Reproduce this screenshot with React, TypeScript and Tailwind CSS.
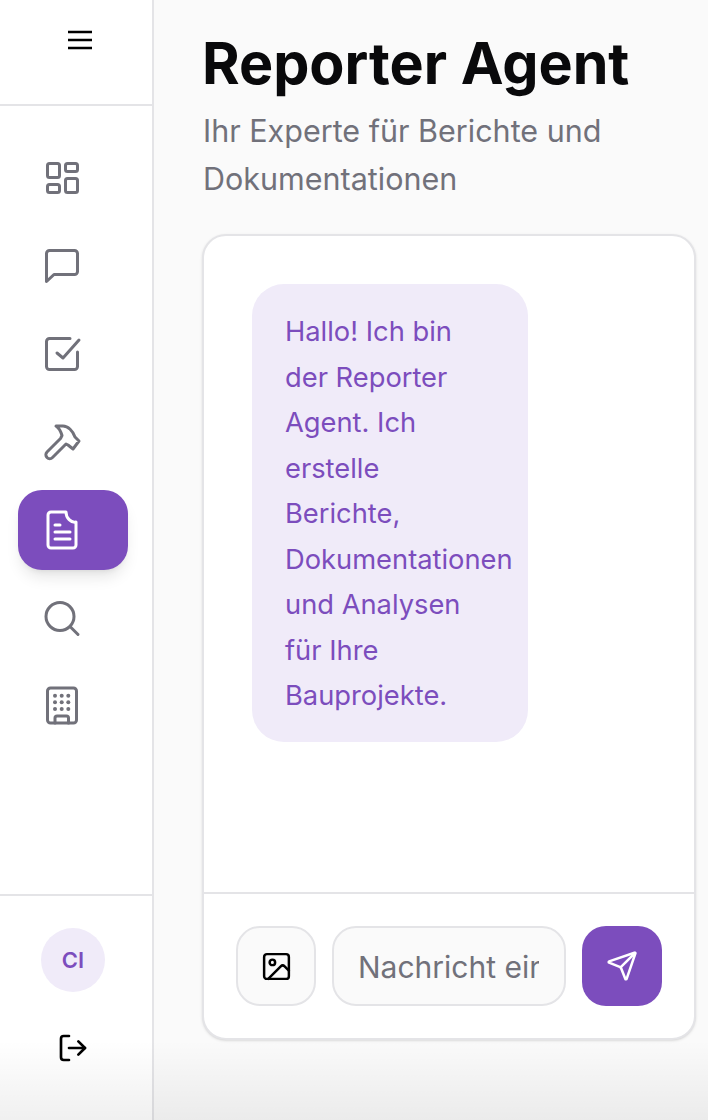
import { Image, Send, LogOut } from "lucide-react";

function NavSvg({ children }: { children: React.ReactNode }) {
  return (
    <svg width="40" height="40" viewBox="0 0 40 40" fill="none" stroke="currentColor" strokeWidth="3" strokeLinecap="round" strokeLinejoin="round">
      {children}
    </svg>
  );
}

const navItems = [
  {
    key: "dashboard",
    icon: (
      <NavSvg>
        <rect x="5.5" y="5.5" width="12" height="14" rx="2" />
        <rect x="23.5" y="5.5" width="12" height="8" rx="2" />
        <rect x="5.5" y="26.5" width="12" height="8" rx="2" />
        <rect x="23.5" y="20.5" width="12" height="14" rx="2" />
      </NavSvg>
    ),
  },
  {
    key: "chat",
    icon: (
      <NavSvg>
        <path d="M7.5 4.5h25a3 3 0 0 1 3 3v18a3 3 0 0 1-3 3H12l-7.5 7V7.5a3 3 0 0 1 3-3z" />
      </NavSvg>
    ),
  },
  {
    key: "tasks",
    icon: (
      <NavSvg>
        <path d="M28 4.5H7.5a3 3 0 0 0-3 3v25a3 3 0 0 0 3 3h25a3 3 0 0 0 3-3V18" />
        <path d="M15 19l6 5L37 6" />
      </NavSvg>
    ),
  },
  {
    key: "tools",
    icon: (
      <NavSvg>
        <path d="M14 4h7c5 0 10 5 12 11l4 4-6 8-5-4-2-1L10.5 35.5a3.8 3.8 0 0 1-5.5-5.5L18.5 16.5l1.5-3C19 10 17 6 14 4z" />
      </NavSvg>
    ),
  },
  {
    key: "reports",
    active: true,
    icon: (
      <NavSvg>
        <path d="M24 2H9a3 3 0 0 0-3 3v30a3 3 0 0 0 3 3h22a3 3 0 0 0 3-3V12c-5 1-10-4-10-10z" />
        <path d="M13 15h5M13 22h15M13 29h15" />
      </NavSvg>
    ),
  },
  {
    key: "search",
    icon: (
      <NavSvg>
        <circle cx="18" cy="18.5" r="14" />
        <path d="M28.5 29L36 36.5" />
      </NavSvg>
    ),
  },
  {
    key: "building",
    icon: (
      <NavSvg>
        <rect x="5.5" y="2" width="29" height="35" rx="3" />
        <path d="M13 37v-5a2 2 0 0 1 2-2h9.5a2 2 0 0 1 2 2v5" />
        <g fill="currentColor" stroke="none">
          <circle cx="13" cy="9.7" r="2" />
          <circle cx="19.7" cy="9.7" r="2" />
          <circle cx="26.3" cy="9.7" r="2" />
          <circle cx="13" cy="16.3" r="2" />
          <circle cx="19.7" cy="16.3" r="2" />
          <circle cx="26.3" cy="16.3" r="2" />
          <circle cx="13" cy="23" r="2" />
          <circle cx="19.7" cy="23" r="2" />
          <circle cx="26.3" cy="23" r="2" />
        </g>
      </NavSvg>
    ),
  },
];

export default function App() {
  return (
    <div className="relative flex h-[1120px] w-[708px] overflow-hidden bg-[#fafafa] font-['Inter',sans-serif]">
      <aside className="flex w-[154px] shrink-0 flex-col border-r-2 border-[#e4e4e7] bg-white">
        <div className="flex h-[106px] shrink-0 items-start justify-center border-b-2 border-[#e4e4e7] pt-6 pl-[8px] text-black">
          <svg width="32" height="32" viewBox="0 0 32 32" fill="none" stroke="currentColor" strokeWidth="2.5">
            <path d="M4 8h24M4 16h24M4 24h24" />
          </svg>
        </div>
        <nav className="flex flex-1 flex-col gap-2 px-[18px] pt-8">
          {navItems.map((item) => (
            <div
              key={item.key}
              className={`flex h-20 w-[110px] items-center rounded-[24px] pl-6 ${
                item.active ? "bg-[#7c4dbd] text-white shadow-lg" : "text-[#71717a]"
              }`}
            >
              {item.icon}
            </div>
          ))}
        </nav>
        <div className="flex h-[226px] shrink-0 flex-col items-center border-t-2 border-[#e4e4e7] pt-8 pr-[6px]">
          <div className="flex h-16 w-16 items-center justify-center rounded-full bg-[#f0ebf9] text-[22px] font-semibold text-[#7c4dbd]">
            CI
          </div>
          <div className="mt-10 text-black">
            <LogOut size={32} strokeWidth={2} />
          </div>
        </div>
      </aside>
      <main className="flex min-w-0 flex-1 flex-col pr-3 pl-12">
        <h1 className="mt-[31px] text-[57.4px] leading-[64px] font-bold whitespace-nowrap text-[#09090b]">Reporter Agent</h1>
        <p className="mt-[12px] pl-px text-[30.5px] leading-[48px] text-[#71717a]">Ihr Experte für Berichte und Dokumentationen</p>
        <section className="mt-[31px] flex h-[806px] flex-col rounded-[24px] border-2 border-[#e4e4e7] bg-white shadow-sm">
          <div className="flex-1 p-12">
            <div className="w-[276px] rounded-[32px] bg-[#f0ebf9] pt-[25px] pr-[31px] pb-[23px] pl-[33px] text-[27.3px] leading-[45.5px] text-[#7c4dbd]">
              Hallo! Ich bin der Reporter Agent. Ich erstelle Berichte, Dokumentationen und Analysen für Ihre Bauprojekte.
            </div>
          </div>
          <div className="flex gap-4 border-t-2 border-[#e4e4e7] p-8">
            <button className="flex h-20 w-20 shrink-0 items-center justify-center rounded-[24px] border-2 border-[#e4e4e7] bg-[#fafafa] text-black">
              <Image size={33} strokeWidth={1.8} />
            </button>
            <input
              className="h-20 min-w-0 flex-1 rounded-[24px] border-2 border-[#e4e4e7] bg-[#fafafa] pt-[2px] pr-[25px] pl-6 text-[30px] outline-none placeholder:text-[#71717a]"
              placeholder="Nachricht eingeben..."
              readOnly
            />
            <button className="flex h-20 w-20 shrink-0 items-center justify-center rounded-[24px] bg-[#7c4dbd] text-white">
              <Send size={32} strokeWidth={1.9} />
            </button>
          </div>
        </section>
      </main>
      <div className="pointer-events-none absolute inset-x-0 bottom-0 h-20 bg-gradient-to-b from-transparent to-black/[0.06]" />
    </div>
  );
}
